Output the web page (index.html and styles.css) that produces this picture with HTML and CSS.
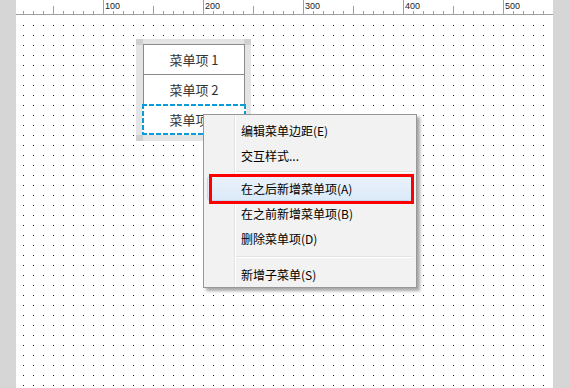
FILE: index.html
```html
<!DOCTYPE html>
<html lang="zh-CN">
<head>
  <meta charset="UTF-8">
  <title>菜单编辑</title>
  <link rel="stylesheet" href="styles.css">
</head>
<body>
  <div class="canvas">
    <!-- Top ruler -->
    <div class="ruler">
      <span class="ruler-offset"></span>
      <span class="ruler-label">100</span>
      <span class="ruler-label">200</span>
      <span class="ruler-label">300</span>
      <span class="ruler-label">400</span>
      <span class="ruler-label">500</span>
    </div>

    <!-- Design surface -->
    <div class="stage">
      <div class="widget">
        <span class="handle handle-tl"></span>
        <span class="handle handle-tr"></span>
        <span class="handle handle-bl"></span>
        <span class="handle handle-br"></span>
        <div class="menu-box">
          <div class="menu-row">菜单项 1</div>
          <div class="menu-row">菜单项 2</div>
          <div class="menu-row selected">菜单项 3</div>
        </div>
      </div>

      <!-- Context menu -->
      <div class="context-menu">
        <div class="cm-item">编辑菜单边距(E)</div>
        <div class="cm-item">交互样式...</div>
        <div class="cm-sep"></div>
        <div class="cm-item hover">在之后新增菜单项(A)</div>
        <div class="cm-item">在之前新增菜单项(B)</div>
        <div class="cm-item">删除菜单项(D)</div>
        <div class="cm-sep sep-wide"></div>
        <div class="cm-item">新增子菜单(S)</div>
        <span class="mark"></span>
      </div>
    </div>
  </div>
</body>
</html>
```

FILE: styles.css
```css
/* Page */
* {
  margin: 0;
  padding: 0;
  box-sizing: border-box;
}

body {
  background-color: #d6d6d6;
  font-family: 'Noto Sans CJK SC', sans-serif;
  overflow: hidden;
}

.canvas {
  margin: 0 17px 0 16px;
  height: 388px;
  background-color: #fff;
}

/* Ruler */
.ruler {
  display: flex;
  height: 16px;
  overflow: hidden;
  background:
    linear-gradient(#a0a0a0, #a0a0a0) 0 14px / 100% 1px no-repeat,
    linear-gradient(to right, #a0a0a0 1px, transparent 1px) 87px 0 / 100px 14px repeat-x,
    linear-gradient(to right, #a0a0a0 1px, transparent 1px) 37px 6px / 100px 8px repeat-x,
    linear-gradient(to right, #a0a0a0 1px, transparent 1px) 7px 11px / 10px 3px repeat-x,
    #fff;
}

.ruler-offset {
  flex: none;
  width: 87px;
}

.ruler-label {
  flex: none;
  width: 100px;
  padding: 1px 0 0 2px;
  font: 9px/11px 'Liberation Sans', sans-serif;
  color: #222;
}

/* Dotted grid */
.stage {
  position: relative;
  height: 372px;
  background: conic-gradient(at 1px 1px, transparent 270deg, #0000ff 0) 7px 9px / 10px 10px;
}

/* Menu widget */
.widget {
  position: absolute;
  left: 120px;
  top: 23px;
  width: 115px;
  height: 102px;
  padding: 5px 6px 5px 7px;
  background-color: #e4e4e4;
}

.handle {
  position: absolute;
  width: 7px;
  height: 6px;
  background-color: #d0d0d0;
}

.handle-tl { left: 0; top: 0; }
.handle-tr { right: 0; top: 0; }
.handle-bl { left: 0; bottom: 0; }
.handle-br { right: 0; bottom: 0; }

.menu-box {
  position: relative;
  background-color: #fff;
  border: 1px solid #8a8a8a;
}

.menu-row {
  height: 30px;
  line-height: 30px;
  text-align: center;
  font-size: 13px;
  color: #333;
  border-bottom: 1px solid #8a8a8a;
}

.menu-row + .menu-row {
  height: 29px;
  line-height: 29px;
  border-bottom: none;
}

.menu-row.selected {
  height: 31px;
  line-height: 31px;
  margin: 0 -2px -1px;
  background:
    repeating-linear-gradient(to right, #0a9bd8 0 5px, transparent 5px 7px) 0 0 / 100% 2px no-repeat,
    repeating-linear-gradient(to right, #0a9bd8 0 5px, transparent 5px 7px) 0 100% / 100% 2px no-repeat,
    repeating-linear-gradient(to bottom, #0a9bd8 0 5px, transparent 5px 7px) 0 0 / 2px 100% no-repeat,
    repeating-linear-gradient(to bottom, #0a9bd8 0 5px, transparent 5px 7px) 100% 0 / 2px 100% no-repeat,
    #fff;
}

/* Context menu */
.context-menu {
  position: absolute;
  left: 187px;
  top: 98px;
  width: 214px;
  padding-top: 3px;
  border: 1px solid #979797;
  background:
    linear-gradient(to right, transparent 30px, #e2e3e3 30px 31px, #fff 31px 32px, transparent 32px),
    #f2f2f2;
  box-shadow: 3px 3px 3px rgba(0, 0, 0, 0.35);
}

.cm-item {
  height: 25px;
  line-height: 25px;
  padding-left: 37px;
  font-size: 12px;
  color: #000;
  white-space: nowrap;
}

.cm-item.hover {
  margin: 0 4px 0 3px;
  padding-left: 33px;
  line-height: 23px;
  border: 1px solid #bcd9f3;
  border-radius: 3px;
  background: linear-gradient(#e9f2fb, #dbeaf8);
}

.cm-sep {
  height: 2px;
  margin: 3px 3px 3px 32px;
  border-top: 1px solid #e2e3e3;
  border-bottom: 1px solid #fff;
}

.cm-sep.sep-wide {
  margin: 5px 3px 4px 32px;
}

/* Red annotation box */
.mark {
  position: absolute;
  left: 5px;
  top: 59px;
  width: 205px;
  height: 30px;
  border: 3px solid #ff0000;
  pointer-events: none;
}
```
